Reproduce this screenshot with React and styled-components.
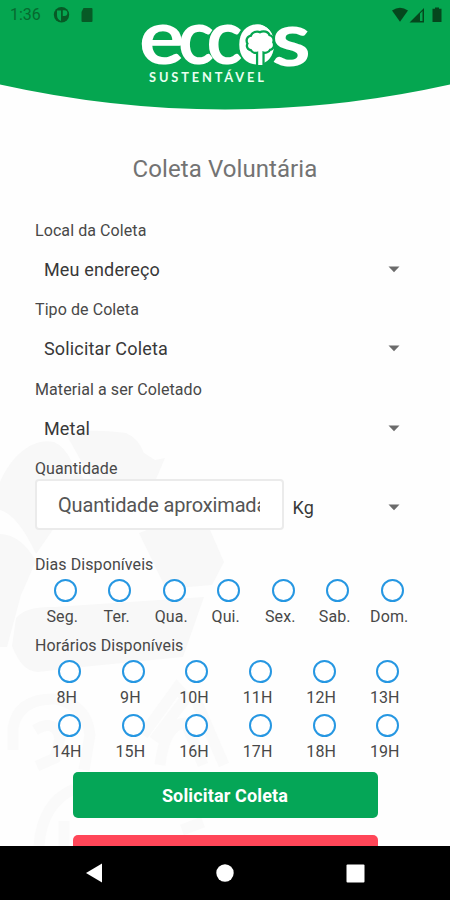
import React from "react";
import styled, { createGlobalStyle } from "styled-components";

const GlobalStyle = createGlobalStyle`
  * { box-sizing: border-box; }
  html, body { margin: 0; padding: 0; background: #fff; }
  body { font-family: Roboto, "Liberation Sans", sans-serif; color: #444; }
`;

const Screen = styled.div`
  position: relative;
  width: 450px;
  height: 900px;
  display: flex;
  flex-direction: column;
  overflow: hidden;
  background: #fefefe;
`;

const Watermark = styled.svg`
  position: absolute;
  left: 0;
  top: 420px;
`;

const Header = styled.header`
  position: relative;
  height: 111px;
  flex: none;
`;

const HeaderCurve = styled.svg`
  position: absolute;
  inset: 0;
`;

const StatusBar = styled.div`
  position: relative;
  height: 30px;
  padding: 0 6px 0 10px;
  display: flex;
  justify-content: space-between;
  align-items: center;
  color: #07692f;
`;

const StatusGroup = styled.div`
  display: flex;
  align-items: center;
`;

const Clock = styled.span`
  width: 43px;
  font-size: 16px;
  line-height: 30px;
`;

const Logo = styled.svg`
  position: absolute;
  left: 130px;
  top: 10px;
  overflow: visible;
`;

const Form = styled.main`
  position: relative;
  flex: 1;
  min-height: 0;
  overflow: hidden;
  padding: 43px 35px 0;
  display: flex;
  flex-direction: column;
`;

const Title = styled.h1`
  margin: 0 0 31px;
  font-size: 24px;
  font-weight: 400;
  line-height: 30px;
  letter-spacing: 0.08px;
  text-align: center;
  color: #737373;
`;

const Label = styled.div`
  height: 30px;
  flex: none;
  line-height: 31px;
  font-size: 16px;
  letter-spacing: 0.08px;
  color: #484848;
  white-space: nowrap;
`;

const SelectRow = styled.div`
  height: 49.3px;
  padding: 0 15.5px 0 9px;
  display: flex;
  align-items: center;
  justify-content: space-between;
  font-size: 18px;
  letter-spacing: 0.16px;
  color: #383838;
  flex: ${(p) => (p.$grow ? "1" : "none")};
`;

const QuantityRow = styled.div`
  display: flex;
  height: 66.5px;
  flex: none;
`;

const QuantityField = styled.div`
  width: 248.5px;
  height: 51px;
  margin-top: -4px;
  padding: 0 21px;
  border: 2px solid #ebebeb;
  border-radius: 4px;
  background: #fff;
  font-size: 20px;
  letter-spacing: -0.15px;
  color: #555;
`;

const FieldText = styled.div`
  overflow: hidden;
  white-space: nowrap;
  line-height: 49px;
  width: 202px;
`;

const Options = styled.div`
  display: grid;
  flex: none;
  grid-template-columns: repeat(${(p) => p.$cols}, ${(p) => p.$w}px);
  margin-left: ${(p) => p.$left}px;
`;

const Option = styled.div`
  height: ${(p) => p.$h}px;
  display: flex;
  flex-direction: column;
  align-items: center;
  font-size: 16px;
  letter-spacing: 0.1px;
  color: #484848;
`;

const Ring = styled.span`
  width: 23px;
  height: 23px;
  flex: none;
  border: 2px solid #2697e2;
  border-radius: 50%;
  background: #fff;
`;

const OptionText = styled.span`
  height: 20px;
  margin-top: 5px;
  margin-right: 6px;
  line-height: 20px;
`;

const Button = styled.button`
  width: 305px;
  height: 46px;
  flex: none;
  margin: ${(p) => p.$top}px auto 0;
  padding: 0;
  border: 0;
  border-radius: 5px;
  background: ${(p) => p.$bg};
  color: #fff;
  font: 700 18px/48px Roboto, sans-serif;
  letter-spacing: 0.15px;
`;

const NavBar = styled.nav`
  position: relative;
  height: 54px;
  flex: none;
  background: #000;
  display: flex;
  justify-content: space-between;
  align-items: center;
  padding: 0 85px;
`;

const Arrow = () => (
  <svg width="12" height="7" viewBox="0 0 12 7">
    <path d="M0.5 0.5h11L6 6.3z" fill="#6b6b6b" />
  </svg>
);

const Select = ({ children, grow }) => (
  <SelectRow $grow={grow}>
    <span>{children}</span>
    <Arrow />
  </SelectRow>
);

const DAYS = ["Seg.", "Ter.", "Qua.", "Qui.", "Sex.", "Sab.", "Dom."];
const HOURS = ["8H", "9H", "10H", "11H", "12H", "13H", "14H", "15H", "16H", "17H", "18H", "19H"];

const TREE =
  "M258.200 66V51.200C255.500 52.500 252.500 51.600 251.700 49.200C248.500 49.200 247 46 248.800 43.600C246.500 40.500 248.200 36.800 251.800 36.800C252.500 33 257 31.700 260 33.500C263.500 31.300 268 32.600 268.600 36C272 36.500 273.300 39.500 272 42.300C274 45 272.500 48.600 269.400 48.800C268.300 51.600 265 52.300 262.400 51V66z";

export default function App() {
  return (
    <Screen>
      <GlobalStyle />
      <Watermark width="260" height="426" viewBox="0 420 260 426" fill="#f8f8f8">
        <path d="M0 482C12 454 34 437 54 442q10 4 18 20l14 20-50 72Q18 515 0 510z" />
        <path d="M66 434q20-6 60-1 12 5 18 20l11 7 10-2-14 33-38-2-18-3z" />
        <path d="M0 534q20 0 36 27l-15 34-14 52H0z" />
        <path d="M139 533l62-24 23 53-12 23-46 4z" />
        <path d="M12 646l4-28q10-12 38-11l150-10-21 60-101 10-44 5q-16 0-26-26z" />
        <g fill="none" stroke="#fafafa" strokeWidth="11">
          <path d="M13 750V728q5-30 43-29 31 6 34 36l-6 35" />
          <path d="M35 730q20-12 25 8l-5 20-18 8" />
          <path d="M143 735l34-47 9 10-32 42M160 765q5-42 26-42l17 42M196 700l28 65" />
          <path d="M39 846q3-43 35-57M64 846v-25M182 830l21-8" />
        </g>
      </Watermark>

      <Header>
        <HeaderCurve width="450" height="111" viewBox="0 0 450 111">
          <path d="M0 0H450V84.500Q225 134.500 0 84.500z" fill="#05a650" />
        </HeaderCurve>
        <StatusBar>
          <StatusGroup>
            <Clock>1:36</Clock>
            <svg width="42" height="16" viewBox="0 0 42 16">
              <circle cx="8.500" cy="7.700" r="7.700" fill="#075a26" />
              <path d="M4 3.500h4v10.500Q4 12 4 8.500zM9.800 3.200h1.700a2.800 2.800 0 0 1 0 5.800H9.800z" fill="#05a650" />
              <path d="M32 1h8q1 0 1 1v12q0 1-1 1h-9q-1 0-1-1V5z" transform="translate(-1.500 0)" fill="#075a26" />
            </svg>
          </StatusGroup>
          <svg width="52" height="16" viewBox="392 6 52 16" fill="#05471d">
            <path d="M392 9.500q8-5.500 16 0l-8 11.200z" />
            <path d="M424 7v14.500h-14.500zM420 12.500v7.500h2.500V10z" fillRule="evenodd" />
            <path d="M435 6.500h4V7.800h2.500V21h-9V7.800h2.500z" />
          </svg>
        </StatusBar>
        <Logo width="190" height="80" viewBox="130 10 190 80">
          <g fontFamily="Lato" fontWeight="700" fontSize="76" fill="#fff">
            <text transform="translate(139 63.500) scale(1.120 1)">e</text>
            <text transform="translate(178 63.500) scale(.98 1)">c</text>
            <text transform="translate(206.500 63.500) scale(.98 1)">c</text>
            <text transform="translate(237 63.500) scale(.9 1)">o</text>
            <text transform="translate(271.500 65.500) scale(1.180 1)">s</text>
          </g>
          <ellipse cx="258" cy="43.500" rx="16" ry="19" fill="#fff" />
          <path d={TREE} fill="#fff" stroke="#05a650" strokeWidth="4.500" strokeLinejoin="round" />
          <path d={TREE} fill="#fff" />
          <path d="M255.500 65h10v4h-10z" fill="#05a650" />
          <text x="149" y="82" fontFamily="Lato" fontWeight="700" fontSize="12.800" fill="#e9fff1" textLength="115" lengthAdjust="spacing">SUSTENTÁVEL</text>
        </Logo>
      </Header>

      <Form>
        <Title>Coleta Voluntária</Title>
        <Label>Local da Coleta</Label>
        <Select>Meu endereço</Select>
        <Label>Tipo de Coleta</Label>
        <Select>Solicitar Coleta</Select>
        <Label>Material a ser Coletado</Label>
        <Select>Metal</Select>
        <Label>Quantidade</Label>
        <QuantityRow>
          <QuantityField>
            <FieldText>Quantidade aproximada</FieldText>
          </QuantityField>
          <Select grow>Kg</Select>
        </QuantityRow>
        <Label>Dias Disponíveis</Label>
        <Options $cols={7} $w={54.5} $left={3}>
          {DAYS.map((d) => (
            <Option key={d} $h={51}>
              <Ring />
              <OptionText>{d}</OptionText>
            </Option>
          ))}
        </Options>
        <Label>Horários Disponíveis</Label>
        <Options $cols={6} $w={63.6} $left={3}>
          {HOURS.map((h) => (
            <Option key={h} $h={53.5}>
              <Ring />
              <OptionText>{h}</OptionText>
            </Option>
          ))}
        </Options>
        <Button $top={5} $bg="#05a657">Solicitar Coleta</Button>
        <Button $top={17} $bg="#ff4658" aria-hidden="true" />
      </Form>

      <NavBar>
        <svg width="18" height="20" viewBox="0 0 18 20"><path d="M1 10L17 .5v19z" fill="#fff" /></svg>
        <svg width="18" height="18" viewBox="0 0 18 18"><circle cx="9" cy="9" r="8.700" fill="#fff" /></svg>
        <svg width="19" height="19" viewBox="0 0 19 19"><rect x=".5" y=".5" width="18" height="18" rx="1" fill="#fff" /></svg>
      </NavBar>
    </Screen>
  );
}
